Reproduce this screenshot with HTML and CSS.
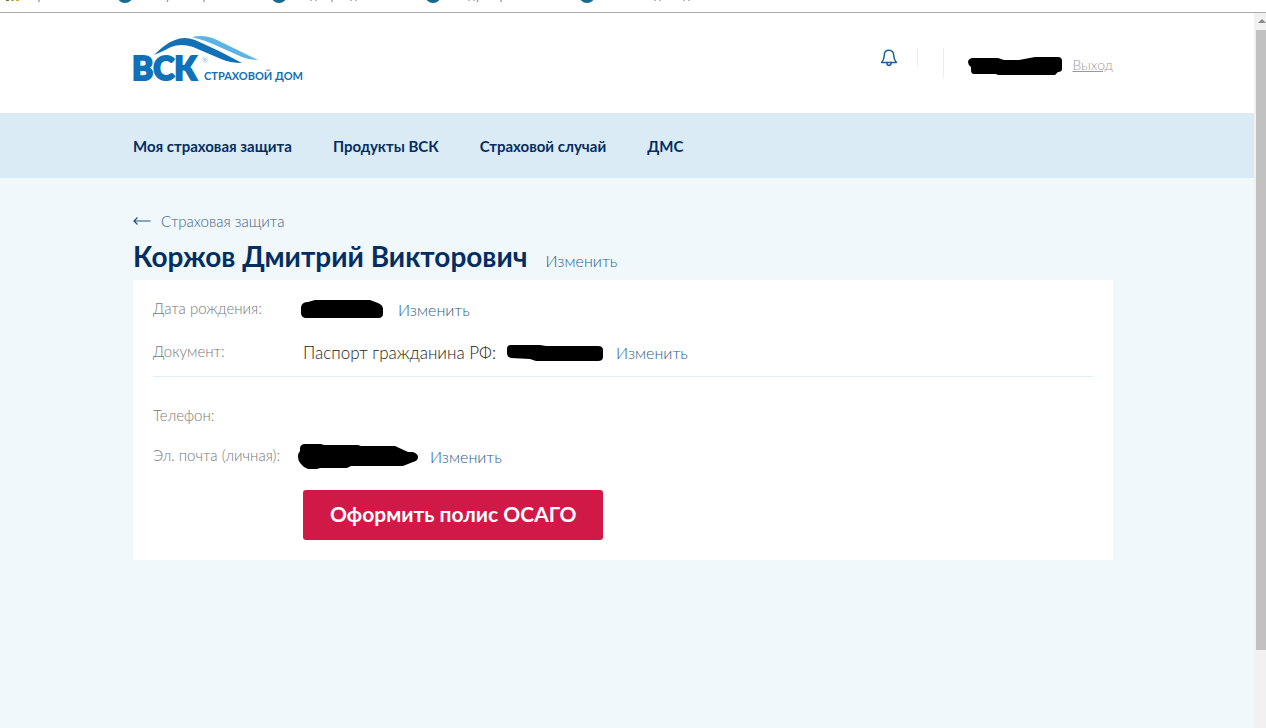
FILE: index.html
```html
<!DOCTYPE html>
<html lang="ru">

<head>
    <meta charset="utf-8">
    <title>ВСК Страховой дом</title>
    <link rel="stylesheet" href="styles.css">
</head>

<body>
    <!-- панель закладок -->
    <div class="bookmarks">
        <svg width="700" height="12" viewBox="0 0 700 12" aria-hidden="true">
            <path d="M6 0h3v1h-3z" fill="#5d7a3a" />
            <path d="M11 0h3v1h-3zM16 0h3v1h-3z" fill="#c9a93c" />
            <g fill="#17698f">
                <circle cx="125" cy="-5" r="8" />
                <circle cx="279" cy="-5" r="8" />
                <circle cx="433" cy="-5" r="8" />
                <circle cx="587" cy="-5" r="8" />
            </g>
            <path d="M39 0v2M168 0l-1 2M204 0v2M311 0v1M316 0v1M332 0v2M351 0v1M356 0v1M469 0v1M474 0v1M478 0l-1 2M501 0v2M655 0v1M660 0v1M684 0v1M689 0v1" stroke="#777" />
        </svg>
    </div>

    <div class="viewport">
        <div class="page">
            <header class="header">
                <div class="container header-row">
                    <a class="logo" href="#" aria-label="ВСК Страховой дом">
                        <svg width="180" height="60" viewBox="0 0 180 60">
                            <path d="M21 19C29 11 36 6 42 4Q51 0 62 4L86 15L109 27Q97 27 88 23L60 11Q48 7 38 11Q31 15 21 19Z" fill="#1071b8" />
                            <path d="M59 1Q72-2 84 4L125 24Q116 24 109 21L82 9Q71 4 59 1Z" fill="#5bb4e5" />
                            <text class="logo-main" x="-1" y="44">ВСК</text>
                            <text class="logo-reg" x="69" y="27">®</text>
                            <text class="logo-sub" x="71" y="44">СТРАХОВОЙ ДОМ</text>
                        </svg>
                    </a>
                    <div class="user">
                        <button class="bell" type="button" aria-label="Уведомления">
                            <svg width="18" height="18" viewBox="0 0 18 18" fill="none" stroke="#1c5c9c" stroke-width="1.5" stroke-linejoin="round" stroke-linecap="round">
                                <path d="M9 1.3C6 1.3 4.3 3.4 4.3 6.2C4.3 10 3.3 11.6 1.6 13.4H16.4C14.7 11.6 13.7 10 13.7 6.2C13.7 3.4 12 1.3 9 1.3Z" />
                                <path d="M6.8 13.6C6.8 17.4 11.2 17.4 11.2 13.6" />
                            </svg>
                        </button>
                        <span class="line line-short"></span>
                        <span class="line"></span>
                        <svg class="user-name" width="96" height="20" viewBox="0 0 96 20" aria-hidden="true">
                            <path d="M5 2H31L37 4H52L68 1H91Q95 1 95 5V13Q95 16 91 16L88 19H31L29 18H7Q4 18 4 14V11Q1 9 1 6Q1 3 5 2Z" />
                        </svg>
                        <a class="logout" href="#">Выход</a>
                    </div>
                </div>
            </header>

            <nav class="nav">
                <div class="container nav-row">
                    <a href="#">Моя страховая защита</a>
                    <a href="#">Продукты ВСК</a>
                    <a href="#">Страховой случай</a>
                    <a href="#">ДМС</a>
                </div>
            </nav>

            <main class="main">
                <div class="container">
                    <a class="back" href="#">
                        <svg width="18" height="8" viewBox="0 0 18 8" fill="none" stroke="#1c5580" stroke-width="1.2">
                            <path d="M17.5 4H1M4.5 .5L1 4L4.5 7.5" />
                        </svg>
                        Страховая защита
                    </a>
                    <div class="title">
                        <h1>Коржов Дмитрий Викторович</h1>
                        <a class="edit" href="#">Изменить</a>
                    </div>

                    <section class="card">
                        <dl class="group group-person">
                            <dt>Дата рождения:</dt>
                            <dd>
                                <svg class="hidden-date" width="84" height="20" viewBox="0 0 84 20" aria-hidden="true">
                                    <path d="M8 2L15 0H70L78 3Q83 5 83 9V14Q83 18 78 18H5Q1 17 1 13V7Q2 2 8 2Z" />
                                </svg>
                                <a class="edit" href="#">Изменить</a>
                            </dd>
                            <dt>Документ:</dt>
                            <dd>
                                <span>Паспорт гражданина РФ:</span>
                                <svg class="hidden-doc" width="98" height="18" viewBox="0 0 98 18" aria-hidden="true">
                                    <path d="M5 1H34L40 2H92Q97 2 97 6V13Q97 17 92 17H30L24 15L5 14Q1 13 1 9V5Q1 1 5 1Z" />
                                </svg>
                                <a class="edit" href="#">Изменить</a>
                            </dd>
                        </dl>
                        <dl class="group group-contacts">
                            <dt>Телефон:</dt>
                            <dd></dd>
                            <dt>Эл. почта (личная):</dt>
                            <dd>
                                <svg class="hidden-mail" width="122" height="26" viewBox="0 0 122 26" aria-hidden="true">
                                    <path d="M7 0H24L27 1H61L64 2H98L111 8H116Q121 10 121 13Q121 17 116 18L106 22H54L50 24H23L20 25H11Q6 23 4 20Q1 17 1 13Q1 9 3 7Q2 1 7 0Z" />
                                </svg>
                                <a class="edit" href="#">Изменить</a>
                            </dd>
                        </dl>
                        <button class="submit" type="button">Оформить полис ОСАГО</button>
                    </section>
                </div>
            </main>
        </div>

        <!-- полоса прокрутки -->
        <div class="scrollbar">
            <span class="scroll-up"></span>
            <span class="scroll-thumb"></span>
        </div>
    </div>
</body>

</html>
```
FILE: styles.css
```css
* {
    box-sizing: border-box;
}

body {
    display: flex;
    flex-direction: column;
    height: 100vh;
    margin: 0;
    font-family: Lato, "Open Sans", sans-serif;
    font-size: 16px;
    font-weight: 300;
    line-height: 20px;
    color: #222;
    background: #fff;
    overflow: hidden;
}

a {
    text-decoration: none;
}

svg {
    display: block;
    flex: none;
    overflow: visible;
}

.bookmarks {
    flex: none;
    height: 13px;
    border-bottom: 1px solid #aaa;
    overflow: hidden;
}

.viewport {
    flex: 1;
    display: flex;
    min-height: 0;
}

.page {
    flex: 1;
    display: flex;
    flex-direction: column;
}

.header,
.nav,
.main {
    padding-right: 8px;
}

.container {
    max-width: 980px;
    margin: 0 auto;
}

.header-row {
    display: flex;
    justify-content: space-between;
    height: 100px;
    padding-top: 23px;
}

.logo-main {
    font-size: 32px;
    font-weight: 900;
    fill: #1071b8;
    stroke: #1071b8;
    stroke-width: 2px;
}

.logo-sub {
    font-size: 11px;
    font-weight: 700;
    fill: #1071b8;
}

.logo-reg {
    font-size: 7px;
    fill: #1071b8;
}

.user {
    display: flex;
    align-items: flex-start;
    padding-top: 12px;
}

.bell {
    margin-right: 19px;
    padding: 1px 0 0;
    border: none;
    background: none;
    cursor: pointer;
}

.line {
    width: 1px;
    height: 30px;
    margin-right: 23px;
    background: #e4eef5;
}

.line-short {
    height: 18px;
    margin-right: 25px;
}

.user-name {
    margin: 8px 9px 0 0;
}

.logout {
    margin-top: 7px;
    font-size: 14px;
    color: #999;
    text-decoration: underline;
}

.nav {
    background: #dbebf6;
}

.nav-row {
    display: flex;
    gap: 41px;
    padding: 23px 0 22px;
}

.nav a {
    font-size: 15px;
    font-weight: 700;
    color: #042e61;
}

.main {
    flex: 1;
    padding-top: 33px;
    background: #f0f8fc;
}

.back {
    display: flex;
    align-items: center;
    gap: 10px;
    font-size: 15px;
    color: #3c6286;
}

.title {
    display: flex;
    align-items: baseline;
    gap: 18px;
    padding: 5px 0 4px;
}

.title h1 {
    margin: 0;
    font-size: 28px;
    line-height: 40px;
    font-weight: 700;
    color: #042e61;
}

.edit {
    color: #2c5c88;
}

.card {
    padding: 20px;
    background: #fff;
}

.group {
    display: grid;
    grid-template-columns: 150px 1fr;
    margin: 0;
}

.group dt {
    font-size: 15px;
    line-height: 17px;
    color: #777;
}

.group dd {
    display: flex;
    align-items: center;
    min-height: 20px;
    margin: 0;
    font-size: 17px;
}

.group .edit {
    font-size: 16px;
}

.group-person {
    row-gap: 23px;
    padding-bottom: 13px;
    border-bottom: 1px solid #dfeff5;
}

.group-contacts {
    row-gap: 20px;
    padding: 30px 0 23px;
}

.hidden-date {
    margin: 0 14px 0 -3px;
}

.hidden-doc {
    margin: 0 12px 0 10px;
}

.hidden-mail {
    margin: -3px 11px -3px -6px;
}

.submit {
    display: block;
    height: 50px;
    margin-left: 150px;
    padding: 0 27px 4px;
    border: none;
    border-radius: 3px;
    font-family: inherit;
    font-size: 21px;
    font-weight: 700;
    color: #fff;
    background: #d11947;
    cursor: pointer;
}

.scrollbar {
    display: flex;
    flex-direction: column;
    width: 12px;
    padding-left: 2px;
    background: #f1f1f1;
}

.scroll-up {
    height: 17px;
    padding-top: 6px;
}

.scroll-up::before {
    content: "";
    display: block;
    width: 0;
    margin-left: 2px;
    border: 4px solid transparent;
    border-top: none;
    border-bottom-color: #888;
}

.scroll-thumb {
    height: 89%;
    max-height: 620px;
    background: #c1c1c1;
}
```
